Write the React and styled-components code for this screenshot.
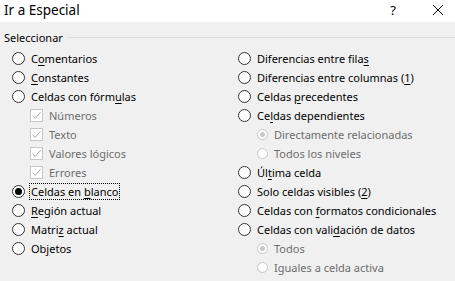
import React from "react";
import styled, { createGlobalStyle, css } from "styled-components";

const Global = createGlobalStyle`
  html, body { margin: 0; padding: 0; background: #f0f0f0; }
  body { font-family: "Noto Sans", "Liberation Sans", sans-serif; font-size: 11px; color: #000; }
`;

const Dialog = styled.div`
  width: 455px;
  height: 281px;
  overflow: hidden;
  background: #f0f0f0;
  display: flex;
  flex-direction: column;
`;

const TitleBar = styled.div`
  height: 22px;
  background: #fff;
  display: flex;
  align-items: center;
  padding-left: 4px;
  flex-shrink: 0;
`;

const Title = styled.div`
  flex: 1;
  font-size: 13.5px;
  line-height: 16px;
  margin-top: -2px;
`;

const TitleButton = styled.div`
  width: ${p => p.$w}px;
  display: flex;
  justify-content: center;
  align-items: center;
  font-size: 13px;
  margin-top: -2px;
`;

const Group = styled.div`
  padding: 6px 0 0 0;
`;

const GroupHeader = styled.div`
  display: flex;
  align-items: center;
  gap: 4px;
  padding-left: 4px;
  height: 18px;
`;

const GroupLine = styled.div`
  flex: 1;
  height: 1px;
  background: #dcdcdc;
`;

const Columns = styled.div`
  display: grid;
  grid-template-columns: 226px 1fr;
  padding-left: 12px;
  margin-top: 3px;
`;

const Column = styled.div`
  display: flex;
  flex-direction: column;
`;

const Row = styled.div`
  height: 19px;
  display: flex;
  align-items: center;
  padding-left: ${p => p.$indent || 0}px;
  color: ${p => (p.$disabled ? "#6d6d6d" : "#000")};
`;

const RadioCircle = styled.span`
  width: ${p => (p.$small ? 11 : 13)}px;
  height: ${p => (p.$small ? 11 : 13)}px;
  box-sizing: border-box;
  border-radius: 50%;
  border: 1px solid ${p => (p.$disabled ? "#c6c6c6" : "#333")};
  background: #fff;
  display: flex;
  align-items: center;
  justify-content: center;
  flex-shrink: 0;
  margin-right: 5px;
  ${p => p.$checked && css`
    &::after {
      content: "";
      width: ${p.$small ? 5 : 7}px;
      height: ${p.$small ? 5 : 7}px;
      border-radius: 50%;
      background: ${p.$disabled ? "#c6c6c6" : "#000"};
    }
  `}
`;

const CheckBox = styled.span`
  width: 13px;
  height: 13px;
  box-sizing: border-box;
  border: 1px solid #c6c6c6;
  background: #fff;
  flex-shrink: 0;
  margin-right: 5px;
  display: flex;
  align-items: center;
  justify-content: center;
`;

const Label = styled.span`
  line-height: 15px;
  white-space: nowrap;
  padding: 0 1px;
  margin-left: -1px;
  border: 1px dotted ${p => (p.$focus ? "#000" : "transparent")};
  u { text-underline-offset: 2px; }
`;

const Check = () => (
  <svg width="11" height="11" viewBox="0 0 11 11">
    <path d="M1.5 5.8 L4.2 8.4 L9.6 2.2" fill="none" stroke="#a6a6a6" strokeWidth="1" />
  </svg>
);

function Radio({ children, checked, disabled, small, indent, focus }) {
  return (
    <Row $disabled={disabled} $indent={indent}>
      <RadioCircle $checked={checked} $disabled={disabled} $small={small} />
      <Label $focus={focus}>{children}</Label>
    </Row>
  );
}

function Checkbox({ children, indent }) {
  return (
    <Row $disabled $indent={indent}>
      <CheckBox><Check /></CheckBox>
      <Label>{children}</Label>
    </Row>
  );
}

export default function App() {
  return (
    <Dialog>
      <Global />
      <TitleBar>
        <Title>Ir a Especial</Title>
        <TitleButton $w={56}>?</TitleButton>
        <TitleButton $w={34}>
          <svg width="12" height="12" viewBox="0 0 12 12">
            <path d="M1 1 L11 11 M11 1 L1 11" stroke="#000" strokeWidth="1" />
          </svg>
        </TitleButton>
      </TitleBar>
      <Group>
        <GroupHeader>
          <span>Seleccionar</span>
          <GroupLine />
        </GroupHeader>
        <Columns>
          <Column>
            <Radio>C<u>o</u>mentarios</Radio>
            <Radio><u>C</u>onstantes</Radio>
            <Radio>Celdas con fórm<u>u</u>las</Radio>
            <Checkbox indent={18}>Números</Checkbox>
            <Checkbox indent={18}>Texto</Checkbox>
            <Checkbox indent={18}>Valores lógicos</Checkbox>
            <Checkbox indent={18}>Errores</Checkbox>
            <Radio checked focus>Celdas en <u>b</u>lanco</Radio>
            <Radio><u>R</u>egión actual</Radio>
            <Radio>Matri<u>z</u> actual</Radio>
            <Radio>Ob<u>j</u>etos</Radio>
          </Column>
          <Column>
            <Radio>Diferencias entre fila<u>s</u></Radio>
            <Radio>Diferencias entre columnas (<u>1</u>)</Radio>
            <Radio>Celdas <u>p</u>recedentes</Radio>
            <Radio>Ce<u>l</u>das dependientes</Radio>
            <Radio disabled small checked indent={19}>Directamente relacionadas</Radio>
            <Radio disabled small indent={19}>Todos los niveles</Radio>
            <Radio>Úl<u>t</u>ima celda</Radio>
            <Radio>Solo celdas visibles (<u>2</u>)</Radio>
            <Radio>Celdas con <u>f</u>ormatos condicionales</Radio>
            <Radio>Celdas con vali<u>d</u>ación de datos</Radio>
            <Radio disabled small checked indent={19}>Todos</Radio>
            <Radio disabled small indent={19}>Iguales a celda activa</Radio>
          </Column>
        </Columns>
      </Group>
    </Dialog>
  );
}
